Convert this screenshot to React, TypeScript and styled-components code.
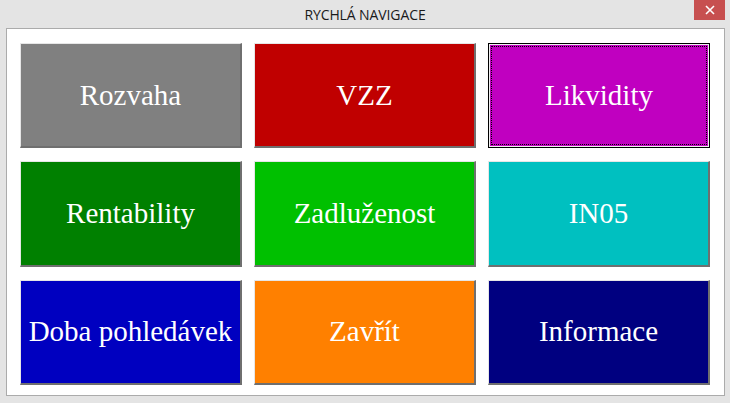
import React from "react";
import styled, { createGlobalStyle, css } from "styled-components";

const GlobalStyle = createGlobalStyle`
  html, body {
    margin: 0;
    padding: 0;
    background: #e4e4e4;
  }
  #root {
    width: 730px;
    height: 403px;
  }
`;

const Window = styled.div`
  width: 730px;
  height: 403px;
  display: flex;
  flex-direction: column;
  background: #e4e4e4;
  box-sizing: border-box;
`;

const TitleBar = styled.div`
  height: 28px;
  flex: none;
  display: grid;
  grid-template-columns: 1fr auto 1fr;
  align-items: center;
`;

const Title = styled.div`
  grid-column: 2;
  font-family: "Open Sans", "Noto Sans", sans-serif;
  font-size: 14px;
  color: #1a1a1a;
  letter-spacing: -0.1px;
  padding-top: 1px;
`;

const CloseButton = styled.div`
  grid-column: 3;
  justify-self: end;
  align-self: start;
  margin-right: 5px;
  width: 31px;
  height: 20px;
  background: #c75050;
  display: flex;
  align-items: center;
  justify-content: center;
`;

const Client = styled.div`
  flex: 1;
  margin: 0 5px 7px 6px;
  border: 1px solid #ababab;
  background: #ffffff;
  padding: 14px 14px 10px 13px;
  display: grid;
  grid-template-columns: repeat(3, 222px);
  grid-auto-rows: 1fr;
  column-gap: 12px;
  row-gap: 13px;
`;

const NavButton = styled.div<{ $bg: string; $focused?: boolean }>`
  position: relative;
  box-sizing: border-box;
  background: ${(p) => p.$bg};
  display: flex;
  align-items: center;
  justify-content: center;
  font-family: "Liberation Serif", "Times New Roman", serif;
  font-size: 29px;
  color: #ffffff;
  white-space: nowrap;
  border-style: solid;
  border-width: 1px 2px 2px 1px;
  border-color: #e6e6e6 #6f6f6f #6f6f6f #e6e6e6;
  ${(p) =>
    p.$focused &&
    css`
      border: 1px solid #000;
      box-shadow: inset 0 0 0 1px #f0f0f0;
      &::after {
        content: "";
        position: absolute;
        inset: 2px;
        border: 1px dotted #000;
        pointer-events: none;
      }
    `}
`;

const buttons: { label: string; bg: string; focused?: boolean }[] = [
  { label: "Rozvaha", bg: "#808080" },
  { label: "VZZ", bg: "#c00000" },
  { label: "Likvidity", bg: "#c000c0", focused: true },
  { label: "Rentability", bg: "#008000" },
  { label: "Zadluženost", bg: "#00c000" },
  { label: "IN05", bg: "#00c0c0" },
  { label: "Doba pohledávek", bg: "#0000c0" },
  { label: "Zavřít", bg: "#ff8000" },
  { label: "Informace", bg: "#000080" },
];

export default function App() {
  return (
    <>
      <GlobalStyle />
      <Window>
        <TitleBar>
          <Title>RYCHLÁ NAVIGACE</Title>
          <CloseButton>
            <svg width="10" height="10" viewBox="0 0 10 10">
              <path d="M1 1 L9 9 M9 1 L1 9" stroke="#ffffff" strokeWidth="1.6" />
            </svg>
          </CloseButton>
        </TitleBar>
        <Client>
          {buttons.map((b) => (
            <NavButton key={b.label} $bg={b.bg} $focused={b.focused}>
              {b.label}
            </NavButton>
          ))}
        </Client>
      </Window>
    </>
  );
}
